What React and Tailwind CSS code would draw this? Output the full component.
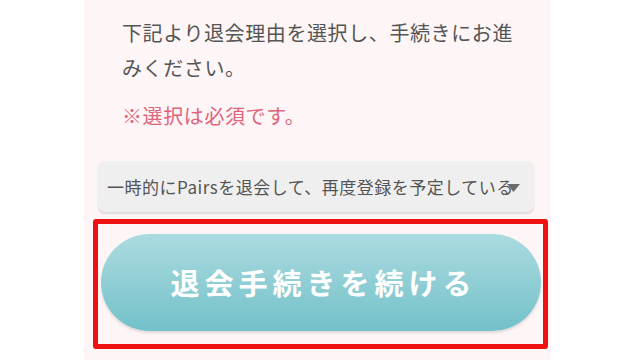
export default function App() {
  return (
    <div className="w-[640px] h-[360px] bg-white overflow-hidden" style={{ fontFamily: '"Noto Sans CJK JP", "Noto Sans", sans-serif' }}>
      <div className="ml-[84px] w-[467px] h-[360px] bg-[#fdf5f6] flex flex-col">
        <div className="pl-[38px] pr-[10px] pt-[15px] text-[20px] leading-[35px] tracking-[0.6px] text-[#555555]">
          <p className="whitespace-nowrap">下記より退会理由を選択し、手続きにお進</p>
          <p>みください。</p>
          <p className="mt-[13px] text-[#e0647c]">※選択は必須です。</p>
        </div>
        <div className="ml-[14px] mt-[28px] w-[436px] h-[51px] bg-[#efefef] rounded-[7px] shadow-[0_2px_2px_rgba(0,0,0,0.12)] flex items-center relative pl-[9px] pr-[14px] overflow-hidden">
          <span className="text-[17px] tracking-[0.5px] text-[#555555] whitespace-nowrap">一時的にPairsを退会して、再度登録を予定している</span>
          <svg className="absolute right-[14px] top-[23px]" width="13" height="8" viewBox="0 0 13 8">
            <polygon points="0,0 13,0 6.5,8" fill="#6b6b6b" />
          </svg>
        </div>
        <div className="ml-[9px] mt-[7px] w-[455px] h-[130px] border-[5px] border-[#ee1111] rounded-[3px] pt-[10px] pl-[3px] pr-[2px] pb-[13px]">
          <div className="w-full h-[97px] rounded-full bg-gradient-to-b from-[#abdbe0] to-[#72c1c9] shadow-[0_2px_3px_rgba(0,0,0,0.12)] flex items-center justify-center">
            <span className="text-white font-bold text-[29px] tracking-[5px] pl-[5px]">退会手続きを続ける</span>
          </div>
        </div>
      </div>
    </div>
  );
}
